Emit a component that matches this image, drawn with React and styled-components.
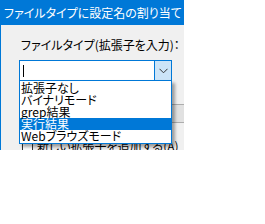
import React from "react";
import styled, { createGlobalStyle } from "styled-components";

const GlobalStyle = createGlobalStyle`
  body {
    margin: 0;
    background: #ffffff;
    font-family: "Noto Sans CJK JP", "Liberation Sans", sans-serif;
    font-feature-settings: "palt";
  }
`;

const items = ["拡張子なし", "バイナリモード", "grep結果", "実行結果", "Webブラウズモード"];

export default function App() {
  return (
    <>
      <GlobalStyle />
      <Window>
        <TitleBar>ファイルタイプに設定名の割り当て</TitleBar>
        <Body>
          <Label>ファイルタイプ(拡張子を入力)：</Label>
          <Combo>
            <Input>
              <Caret />
            </Input>
            <DropButton>
              <svg width="9" height="6" viewBox="0 0 9 6">
                <path d="M0.5 0.8 L4.5 4.8 L8.5 0.8" fill="none" stroke="#333" strokeWidth="1" />
              </svg>
            </DropButton>
            <List>
              {items.map((item, i) => (
                <Item key={item} selected={i === 3}>
                  {item}
                </Item>
              ))}
            </List>
          </Combo>
          <ButtonRow>
            <Button>追加</Button>
          </ButtonRow>
          <CheckRow>
            <Box />
            <CheckText>新しい拡張子を追加する(A)</CheckText>
          </CheckRow>
        </Body>
      </Window>
    </>
  );
}

const Window = styled.div`
  width: 183px;
  height: 150px;
  border-left: 1px solid #0078d7;
  background: #f0f0f0;
  display: flex;
  flex-direction: column;
  overflow: hidden;
`;

const TitleBar = styled.div`
  height: 25px;
  flex-shrink: 0;
  background: #0078d7;
  color: #ffffff;
  font-size: 12px;
  line-height: 25px;
  padding-left: 3px;
  white-space: nowrap;
`;

const Body = styled.div`
  padding: 13px 0 0 18px;
  display: flex;
  flex-direction: column;
`;

const Label = styled.div`
  font-size: 12px;
  line-height: 14px;
  color: #000;
  margin-left: 2px;
  white-space: nowrap;
`;

const Combo = styled.div`
  position: relative;
  margin-top: 8px;
  width: 153px;
  height: 21px;
  box-sizing: border-box;
  border: 1px solid #0078d7;
  background: #fff;
  display: flex;
`;

const Input = styled.div`
  flex: 1;
  display: flex;
  align-items: center;
  padding-left: 3px;
`;

const Caret = styled.div`
  width: 1px;
  height: 12px;
  background: #000;
`;

const DropButton = styled.div`
  width: 16px;
  border-left: 1px solid #0078d7;
  background: #cce4f7;
  display: flex;
  align-items: center;
  justify-content: center;
`;

const List = styled.div`
  position: absolute;
  left: -1px;
  top: 19px;
  width: 153px;
  box-sizing: border-box;
  padding: 1px 0;
  border: 1px solid #0078d7;
  background: #fff;
  box-shadow: 3px 3px 3px rgba(0, 0, 0, 0.35);
  z-index: 2;
`;

const Item = styled.div`
  height: 12px;
  line-height: 12px;
  font-size: 12px;
  padding-left: 1px;
  white-space: nowrap;
  color: ${({ selected }) => (selected ? "#ffffff" : "#000000")};
  background: ${({ selected }) => (selected ? "#0078d7" : "transparent")};
`;

const ButtonRow = styled.div`
  margin-top: 23px;
  display: flex;
  justify-content: flex-end;
  margin-right: -10px;
`;

const Button = styled.div`
  width: 75px;
  height: 19px;
  box-sizing: border-box;
  border-top: 1px solid #adadad;
  border-bottom: 1px solid #adadad;
  background: #e1e1e1;
  font-size: 12px;
  line-height: 17px;
  text-align: center;
`;

const CheckRow = styled.div`
  margin-top: 16px;
  margin-left: 3px;
  display: flex;
  align-items: center;
  gap: 4px;
`;

const Box = styled.div`
  width: 11px;
  height: 11px;
  box-sizing: border-box;
  border: 1px solid #333;
  background: #fff;
`;

const CheckText = styled.div`
  font-size: 12px;
  line-height: 13px;
  text-decoration: underline;
  white-space: nowrap;
`;
